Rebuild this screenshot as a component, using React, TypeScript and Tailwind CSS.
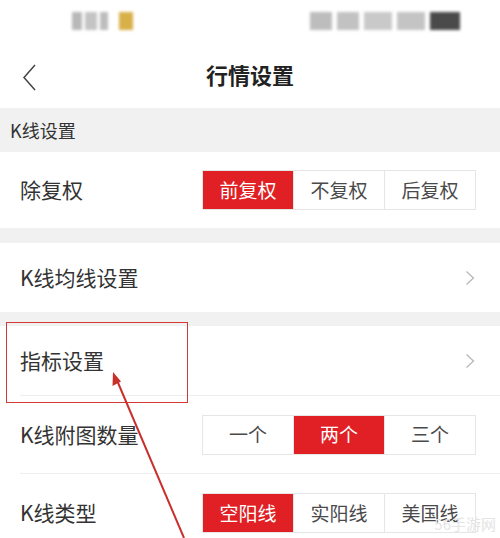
import React from "react";

const font = { fontFamily: '"Noto Sans CJK SC", "Noto Sans", sans-serif' };

function Seg({ items, active }: { items: string[]; active: number }) {
  return (
    <div className="flex h-[40px] w-[274px] border border-[#e6e6e6]">
      {items.map((t, i) => (
        <div
          key={t}
          className={
            "flex flex-1 items-center justify-center text-[19px] " +
            (i === active
              ? "bg-[#e02024] text-white"
              : "bg-white text-[#4a4a4a]") +
            (i > 0 ? " border-l border-[#e6e6e6]" : "")
          }
        >
          {t}
        </div>
      ))}
    </div>
  );
}

function Chevron() {
  return (
    <svg width="10" height="16" viewBox="0 0 10 16" className="mr-[25px]">
      <path d="M1.5 1.5 L8.5 8 L1.5 14.5" fill="none" stroke="#b8b8b8" strokeWidth="1.3" />
    </svg>
  );
}

export default function App() {
  return (
    <div className="relative h-[538px] w-[500px] overflow-hidden bg-white" style={font}>
      {/* status bar */}
      <div className="relative h-[40px]">
        <div className="absolute left-[72px] top-[12px] flex gap-[3px] blur-[1.5px]">
          <div className="h-[18px] w-[10px] bg-[#b8b8b8]" />
          <div className="h-[18px] w-[12px] bg-[#c4c4c4]" />
          <div className="h-[18px] w-[8px] bg-[#bdbdbd]" />
          <div className="ml-[8px] h-[18px] w-[14px] bg-[#d8b04a]" />
        </div>
        <div className="absolute left-[310px] top-[12px] flex gap-[5px] blur-[1.5px]">
          <div className="h-[18px] w-[22px] bg-[#bdbdbd]" />
          <div className="h-[18px] w-[22px] bg-[#c2c2c2]" />
          <div className="h-[18px] w-[28px] bg-[#c9c9c9]" />
          <div className="h-[18px] w-[28px] bg-[#c4c4c4]" />
          <div className="h-[18px] w-[30px] bg-[#4a4a4a]" />
        </div>
      </div>

      {/* nav */}
      <div className="relative flex h-[68px] items-center justify-center">
        <svg width="16" height="28" viewBox="0 0 16 28" className="absolute left-[22px] top-[24px]">
          <path d="M13 1 L2 13.5 L13 26" fill="none" stroke="#444" strokeWidth="1.5" />
        </svg>
        <div className="text-[22px] font-bold text-[#222]">行情设置</div>
      </div>

      {/* section header */}
      <div className="flex h-[44px] items-center bg-[#f1f1f1] pl-[10px] text-[18px] text-[#333]">
        K线设置
      </div>

      {/* 除复权 */}
      <div className="flex h-[76px] items-center justify-between pl-[20px] pr-[24px]">
        <div className="text-[21px] text-[#333]">除复权</div>
        <Seg items={["前复权", "不复权", "后复权"]} active={0} />
      </div>

      <div className="h-[15px] bg-[#f1f1f1]" />

      <div className="flex h-[69px] items-center justify-between pl-[20px]">
        <div className="text-[21px] text-[#333]">K线均线设置</div>
        <Chevron />
      </div>

      <div className="h-[14px] bg-[#f1f1f1]" />

      <div className="ml-[20px] flex h-[70px] items-center justify-between border-b border-[#eeeeee]">
        <div className="text-[21px] text-[#333]">指标设置</div>
        <Chevron />
      </div>

      <div className="ml-[20px] flex h-[78px] items-center justify-between border-b border-[#eeeeee] pr-[24px]">
        <div className="text-[21px] text-[#333]">K线附图数量</div>
        <Seg items={["一个", "两个", "三个"]} active={1} />
      </div>

      <div className="ml-[20px] flex h-[78px] items-center justify-between pr-[24px]">
        <div className="text-[21px] text-[#333]">K线类型</div>
        <Seg items={["空阳线", "实阳线", "美国线"]} active={0} />
      </div>

      {/* annotation box */}
      <div className="pointer-events-none absolute left-[6px] top-[322px] h-[81px] w-[182px] border-[1.5px] border-[#d23a36]" />

      {/* annotation arrow */}
      <svg className="pointer-events-none absolute left-0 top-0" width="500" height="538" viewBox="0 0 500 538">
        <line x1="116" y1="378" x2="184" y2="538" stroke="#c9302c" strokeWidth="2" />
        <path d="M113 372 L112.5 386 L121 381.5 Z" fill="#c9302c" />
      </svg>

      {/* watermark */}
      <div className="pointer-events-none absolute right-[4px] top-[514px] text-[15px] leading-[20px] text-[#e4e4e4]">56手游网</div>
    </div>
  );
}
